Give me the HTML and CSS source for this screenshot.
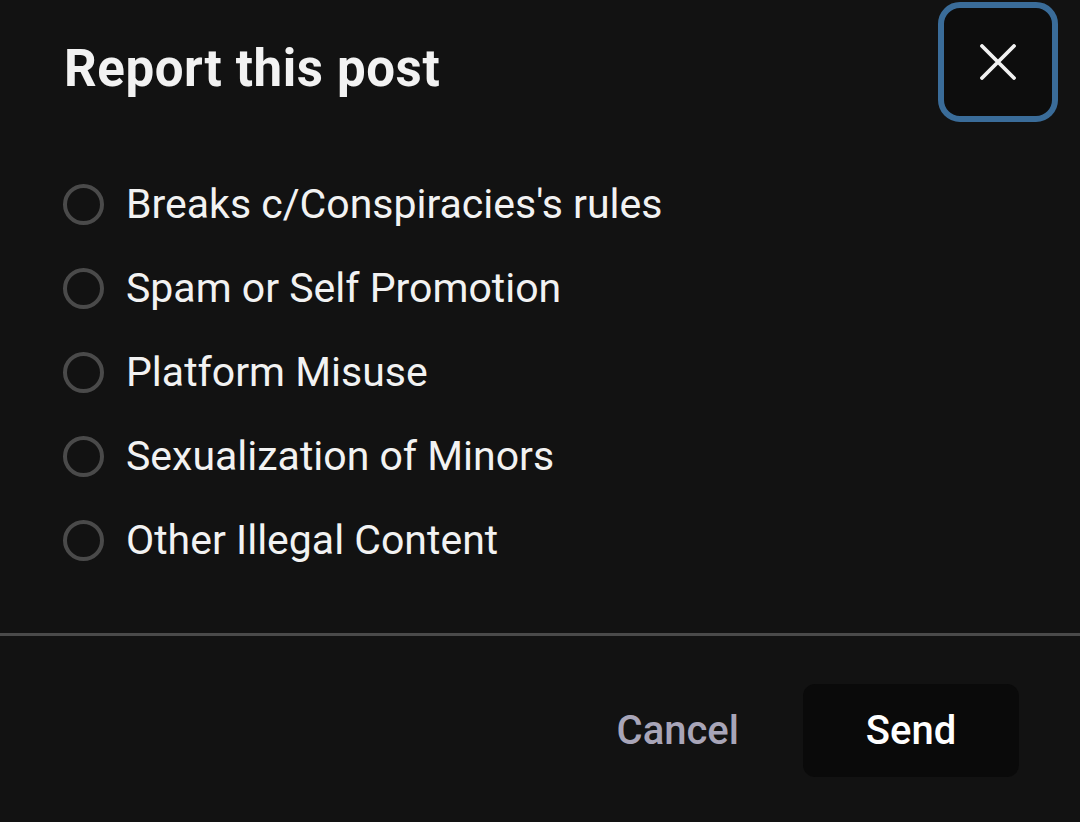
FILE: index.html
```html
<!DOCTYPE html>
<html>
<head>
<meta charset="utf-8">
<link rel="stylesheet" href="styles.css">
</head>
<body>
<div class="dialog">
  <div class="header">
    <h1 class="title">Report this post</h1>
    <button class="close" aria-label="Close">
      <svg width="36" height="36" viewBox="0 0 36 36"><path d="M2 2 L34 34 M34 2 L2 34" stroke="#f2f2f2" stroke-width="3.8" stroke-linecap="round"/></svg>
    </button>
  </div>
  <ul class="options">
    <li class="option"><span class="radio"></span><span class="label">Breaks c/Conspiracies's rules</span></li>
    <li class="option"><span class="radio"></span><span class="label">Spam or Self Promotion</span></li>
    <li class="option"><span class="radio"></span><span class="label">Platform Misuse</span></li>
    <li class="option"><span class="radio"></span><span class="label">Sexualization of Minors</span></li>
    <li class="option"><span class="radio"></span><span class="label">Other Illegal Content</span></li>
  </ul>
  <div class="divider"></div>
  <div class="footer">
    <button class="cancel">Cancel</button>
    <button class="send">Send</button>
  </div>
</div>
</body>
</html>
```

FILE: styles.css
```css
html, body {
  margin: 0;
  padding: 0;
  background: #121212;
  width: 1080px;
  height: 822px;
  overflow: hidden;
  font-family: Roboto, "Liberation Sans", sans-serif;
  color: #f2f2f2;
}
.dialog {
  display: flex;
  flex-direction: column;
  height: 822px;
}
.header {
  display: flex;
  justify-content: space-between;
  align-items: flex-start;
  padding: 2px 22px 0 64px;
}
.title {
  margin: 37px 0 0 0;
  font-size: 51px;
  font-weight: 700;
  line-height: 60px;
  letter-spacing: 0.6px;
}
.close {
  width: 120px;
  height: 120px;
  box-sizing: border-box;
  border: 6px solid #3a6c99;
  border-radius: 22px;
  background: #0d0d0d;
  display: flex;
  align-items: center;
  justify-content: center;
  padding: 0;
}
.options {
  list-style: none;
  margin: 60px 0 0 0;
  padding: 0 0 0 63px;
  display: flex;
  flex-direction: column;
  gap: 40px;
}
.option {
  display: flex;
  align-items: center;
  height: 44px;
}
.radio {
  width: 33px;
  height: 33px;
  border: 4px solid #4a4a4a;
  border-radius: 50%;
  flex: none;
}
.label {
  margin-left: 22px;
  font-size: 41px;
  line-height: 44px;
  color: #f2f2f2;
}
.divider {
  margin-top: 71px;
  height: 3px;
  background: #4a4a4a;
}
.footer {
  display: flex;
  justify-content: flex-end;
  align-items: center;
  padding: 48px 61px 0 0;
  gap: 64px;
}
.cancel {
  background: none;
  border: none;
  padding: 0;
  font-family: inherit;
  font-size: 40px;
  font-weight: 500;
  color: #a8a5b8;
}
.send {
  width: 216px;
  height: 93px;
  border: none;
  border-radius: 12px;
  background: #0a0a0a;
  color: #ffffff;
  font-family: inherit;
  font-size: 40px;
  font-weight: 500;
}
```
